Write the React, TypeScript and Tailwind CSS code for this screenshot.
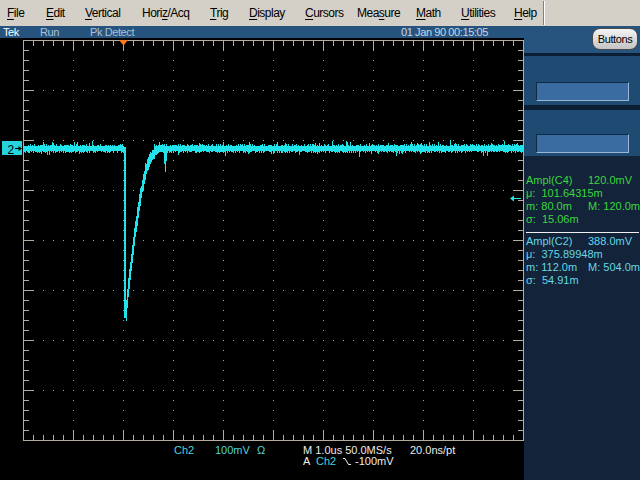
import React from 'react';

const GRAT = '#b4ac9e';
const DOT = '#a0a0a0';
const TRACE = '#22e2ea';

function buildGrid() {
  let lines = 'M23.5 40V441M523.5 40V441M23 40.5H524M23 440.5H524';
  for (let i = 1; i < 50; i++) {
    const x = 23 + 10 * i + 0.5;
    const len = i % 5 === 0 ? 10 : 5;
    lines += `M${x} 41V${41 + len}M${x} 440V${440 - len}`;
  }
  for (let j = 1; j < 40; j++) {
    const y = 40 + 10 * j + 0.5;
    const len = j % 5 === 0 ? 10 : 5;
    lines += `M24 ${y}H${24 + len}M523 ${y}H${523 - len}`;
  }
  let dots = '';
  for (let k = 1; k < 10; k++) {
    const x = 23 + 50 * k;
    for (let y = 50; y < 440; y += 10) dots += `M${x} ${y}h1v1h-1z`;
  }
  for (let k = 1; k < 8; k++) {
    const y = 40 + 50 * k;
    for (let x = 33; x < 523; x += 10) dots += `M${x} ${y}h1v1h-1z`;
  }
  return { lines, dots };
}

const PTS: [number, number][] = [
  [0, 168],
  [2, 144],
  [8, 92],
  [15, 45],
  [20, 22],
  [25, 9],
  [30, 3],
  [36, 0],
];

function shape(t: number) {
  if (t <= 0) return 168;
  for (let i = 1; i < PTS.length; i++) {
    const [t1, v1] = PTS[i];
    const [t0, v0] = PTS[i - 1];
    if (t <= t1) return v0 + ((v1 - v0) * (t - t0)) / (t1 - t0);
  }
  return 0;
}

function buildTrace() {
  let s = 987654;
  const r = () => {
    s = (s * 1103515245 + 12345) % 2147483648;
    return s / 2147483648;
  };
  const base = 148.5;
  let d = '';
  for (let x = 24; x < 523; x++) {
    let lo = 146 - (x % 2 === 0 ? r() * 2.5 : r() * 0.8);
    let hi = 151 + (x % 2 === 1 ? r() * 2.5 : r() * 0.8);
    if (r() < 0.06) {
      lo -= 2 + r() * 2;
    }
    if (r() < 0.05) {
      hi += 2 + r() * 2;
    }
    if (x === 124 || x === 125) {
      lo = 147;
      hi = 318;
    } else if (x > 125) {
      const t = x - 125.5;
      const c1 = base + shape(t + 0.5);
      const c0 = base + shape(t - 0.5);
      if (c1 - base > 5) {
        lo = c1 - 3 - r() * 5;
        hi = c0 + 2 + r() * 4;
      } else if (c0 - base > 1) {
        lo = Math.min(lo, c1 - 3 - r() * 2);
        hi = Math.max(hi, c0 + 2 + r() * 3);
      }
      if (x === 165) hi = 172;
      if (x === 164) hi = Math.max(hi, 164);
      if (x === 166) hi = Math.max(hi, 161);
    }
    d += `M${x + 0.5} ${lo.toFixed(1)}V${hi.toFixed(1)}`;
  }
  return d;
}

const GRID = buildGrid();
const TRACE_D = buildTrace();

const MENU: [string, number, number][] = [
  ['File', 0, 39],
  ['Edit', 0, 39],
  ['Vertical', 0, 57],
  ['Horiz/Acq', 4, 68],
  ['Trig', 0, 39],
  ['Display', 0, 56],
  ['Cursors', 0, 52],
  ['Measure', 3, 59],
  ['Math', 0, 45],
  ['Utilities', 0, 53],
  ['Help', 0, 29],
];

function MenuItem({ label, u, w }: { label: string; u: number; w: number }) {
  return (
    <div className="shrink-0" style={{ width: w }}>
      {label.slice(0, u)}
      <span className="underline underline-offset-[2px]">{label[u]}</span>
      {label.slice(u + 1)}
    </div>
  );
}

function Box() {
  return (
    <div className="w-[93px] h-[19px] bg-[#3a6ca2] border-t border-l border-[#0e2a46] border-r-[#9ab8d6] border-b-[#9ab8d6] border-r border-b" />
  );
}

export default function App() {
  return (
    <div className="w-[640px] h-[480px] bg-black flex flex-col overflow-hidden font-['Liberation_Sans','Arial',sans-serif]">
      {/* Menu bar */}
      <div className="h-[26px] bg-[#d4d0c8] flex items-center pl-[7px] text-[12px] tracking-[-0.5px] text-black shrink-0">
        {MENU.map(([l, u, w]) => (
          <MenuItem key={l} label={l} u={u} w={w} />
        ))}
        <div className="w-[2px] h-[24px] border-l border-[#808080] border-r border-r-white shrink-0" />
      </div>

      <div className="flex flex-1">
        {/* Left scope area */}
        <div className="w-[524px] flex flex-col">
          <div className="h-[12px] bg-[#27547e] flex text-[11px] leading-[12px] tracking-[-0.4px] text-[#a9c0d8] pl-[3px]">
            <span className="w-[37px] text-white">Tek</span>
            <span className="w-[50px]">Run</span>
            <span className="w-[311px]">Pk Detect</span>
            <span className="text-[#c8d6e4]">01 Jan 90 00:15:05</span>
          </div>
          <svg width={524} height={406} viewBox="0 38 524 406" className="block" shapeRendering="crispEdges">
            <path d={GRID.dots} fill={DOT} />
            <path d={GRID.lines} stroke={GRAT} strokeWidth={1} fill="none" />
            <path d={TRACE_D} stroke={TRACE} strokeWidth={1} fill="none" />
            {/* trigger position marker */}
            <polygon points="119,40 128,40 123.5,45.5" fill="#ff7a1e" shapeRendering="auto" />
            {/* channel 2 marker */}
            <rect x={2} y={141} width={20} height={14} fill="#25d4dc" />
            <text x={7.5} y={154} fontSize={12} fill="#000" fontFamily="Liberation Sans, Arial, sans-serif">
              2
            </text>
            <path d="M15 148.5H20" stroke="#000" strokeWidth={1} />
            <polygon points="22,148.5 18.5,146 18.5,151" fill="#000" shapeRendering="auto" />
            {/* right reference arrow */}
            <path d="M513 198.5H521" stroke={TRACE} strokeWidth={1} />
            <polygon points="510,198.5 514,195.5 514,201.5" fill={TRACE} shapeRendering="auto" />
          </svg>
          <div className="flex-1 pt-px text-[11px] leading-[11px]">
            <div className="flex pl-[174px]">
              <span className="w-[41px] text-[#4fd2da]">Ch2</span>
              <span className="w-[42px] text-[#4fd2da]">100mV</span>
              <span className="w-[46px] text-[#4fd2da]">Ω</span>
              <span className="w-[107px] text-[#ececec]">M 1.0us 50.0MS/s</span>
              <span className="text-[#ececec]">20.0ns/pt</span>
            </div>
            <div className="flex pl-[303px]">
              <span className="w-[13px] text-[#ececec]">A</span>
              <span className="w-[27px] text-[#4fd2da]">Ch2</span>
              <span className="w-[12px] flex items-center">
                <svg width="8" height="9" viewBox="0 0 8 9">
                  <path d="M0 1.5H2L5.5 7.5H8" stroke="#ececec" strokeWidth={1} fill="none" />
                </svg>
              </span>
              <span className="text-[#ececec]">-100mV</span>
            </div>
          </div>
        </div>

        {/* Right panel */}
        <div className="w-[116px] flex flex-col bg-[#12233a]">
          <div className="h-[27px] bg-[#27547e] flex justify-end items-start pt-[2px] pr-[2px]">
            <div className="w-[46px] h-[22px] rounded-[8px] border border-[#4a4a4a] bg-gradient-to-b from-[#f4f4f4] to-[#c4c4c4] text-[11px] tracking-[-0.4px] text-black flex items-center justify-center">
              Buttons
            </div>
          </div>
          <div className="h-[3px] bg-[#0c1e33]" />
          <div className="h-[49px] bg-[#1f4a71] pt-[26px] pl-[12px]">
            <Box />
          </div>
          <div className="h-[5px] bg-[#0c1e33]" />
          <div className="h-[46px] bg-[#1f4a71] pt-[24px] pl-[12px]">
            <Box />
          </div>
          <div className="pt-[18px] text-[11px] leading-[13px]">
            <div className="pl-[2px] text-[#3cd63c]">
              <div className="flex">
                <span className="w-[62px]">Ampl(C4)</span>
                <span>120.0mV</span>
              </div>
              <div>μ:&nbsp; 101.64315m</div>
              <div className="flex">
                <span className="w-[62px]">m: 80.0m</span>
                <span>M: 120.0m</span>
              </div>
              <div>σ:&nbsp; 15.06m</div>
            </div>
            <div className="mt-[6px] ml-[2px] mr-[1px] h-px bg-[#f0f0f0]" />
            <div className="pt-[2px] pl-[2px] text-[#66d6e6]">
              <div className="flex">
                <span className="w-[62px]">Ampl(C2)</span>
                <span>388.0mV</span>
              </div>
              <div>μ:&nbsp; 375.89948m</div>
              <div className="flex">
                <span className="w-[62px]">m: 112.0m</span>
                <span>M: 504.0m</span>
              </div>
              <div>σ:&nbsp; 54.91m</div>
            </div>
          </div>
        </div>
      </div>
    </div>
  );
}
